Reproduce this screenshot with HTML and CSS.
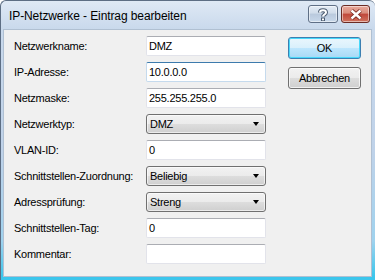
FILE: index.html
```html
<!DOCTYPE html>
<html lang="de">
<head>
    <meta charset="UTF-8">
    <meta name="viewport" content="width=device-width, initial-scale=1.0">
    <title>IP-Netzwerke - Eintrag bearbeiten</title>
    <link rel="stylesheet" href="styles.css">
</head>
<body>
    <div class="window">
        <div class="titlebar">
            <span class="title">IP-Netzwerke - Eintrag bearbeiten</span>
            <div class="caption-buttons">
                <div class="cap help">
                    <svg width="12" height="13" viewBox="0 0 12 13">
                        <path d="M3 4.5 C3 1.5 9 1.5 9 4.5 C9 6.5 6 6.5 6 8.5" fill="none" stroke="#4b5b70" stroke-width="4"/>
                        <rect x="4" y="9.5" width="4" height="3.5" fill="#4b5b70"/>
                        <path d="M3 4.5 C3 1.5 9 1.5 9 4.5 C9 6.5 6 6.5 6 8.5" fill="none" stroke="#fff" stroke-width="2"/>
                        <rect x="5" y="10.5" width="2" height="1.8" fill="#fff"/>
                    </svg>
                </div>
                <div class="cap close">
                    <svg width="14" height="11" viewBox="0 0 14 11">
                        <path d="M2.5 1.5 L11.5 9.5 M11.5 1.5 L2.5 9.5" stroke="#7a2a22" stroke-width="4.2"/>
                        <path d="M2.5 1.5 L11.5 9.5 M11.5 1.5 L2.5 9.5" stroke="#fff" stroke-width="2.4"/>
                    </svg>
                </div>
            </div>
        </div>
        <div class="client">
            <div class="form">
                <span class="label">Netzwerkname:</span>
                <div class="field">DMZ</div>

                <span class="label">IP-Adresse:</span>
                <div class="field focused">10.0.0.0</div>

                <span class="label">Netzmaske:</span>
                <div class="field">255.255.255.0</div>

                <span class="label">Netzwerktyp:</span>
                <div class="combo">DMZ<span class="arrow"></span></div>

                <span class="label">VLAN-ID:</span>
                <div class="field">0</div>

                <span class="label">Schnittstellen-Zuordnung:</span>
                <div class="combo">Beliebig<span class="arrow"></span></div>

                <span class="label">Adressprüfung:</span>
                <div class="combo">Streng<span class="arrow"></span></div>

                <span class="label">Schnittstellen-Tag:</span>
                <div class="field">0</div>

                <span class="label">Kommentar:</span>
                <div class="field"></div>
            </div>
            <div class="actions">
                <div class="btn default">OK</div>
                <div class="btn">Abbrechen</div>
            </div>
        </div>
    </div>
</body>
</html>
```

FILE: styles.css
```css
body {
    margin: 0;
    padding: 0;
    font-family: 'Liberation Sans', Arial, sans-serif;
    background-color: #ffffff;
}
.window {
    width: 375px;
    height: 280px;
    box-sizing: border-box;
    display: flex;
    flex-direction: column;
    padding: 0 3px 3px 2px;
    border-top: 1px solid #5d6e84;
    border-left: 1px solid #5d6e84;
    border-radius: 6px 6px 0 0;
    background: linear-gradient(180deg, #dfe9f5 0px, #c9d9ec 28px, #bfd2e9 150px, #9fd2ee 240px, #3cc6ec 275px);
}
.titlebar {
    height: 28px;
    display: flex;
    align-items: center;
    justify-content: space-between;
}
.title {
    margin-left: 6px;
    font-size: 12px;
    letter-spacing: -0.1px;
    color: #000;
    margin-top: 1px;
}
.caption-buttons {
    display: flex;
    gap: 3px;
    align-self: flex-start;
    margin-top: 4px;
    margin-right: 2px;
}
.cap {
    height: 16px;
    border: 1px solid #5f6f86;
    border-radius: 3px;
    display: flex;
    align-items: center;
    justify-content: center;
    box-shadow: inset 0 0 0 1px rgba(255, 255, 255, 0.5);
}
.help {
    width: 28px;
    background: linear-gradient(180deg, #e4ecf6 0%, #d0dcea 45%, #b9c9dd 50%, #c8d8ea 100%);
}
.close {
    width: 27px;
    border-color: #6b2b24;
    background: linear-gradient(180deg, #e9a99c 0%, #d98c7c 45%, #c0473a 50%, #d0735f 100%);
}
.client {
    flex: 1;
    display: flex;
    border: 1px solid #b0c0d2;
    background-color: #f0f0f0;
    padding: 6px 0 0 10px;
}
.form {
    display: grid;
    grid-template-columns: 132px 120px;
    grid-auto-rows: 20px;
    row-gap: 6px;
    align-content: start;
}
.label {
    font-size: 11px;
    letter-spacing: -0.25px;
    color: #000;
    align-self: center;
}
.field {
    box-sizing: border-box;
    height: 20px;
    background-color: #ffffff;
    border: 1px solid #e2e3ea;
    border-top-color: #abadb3;
    border-radius: 2px;
    font-size: 11px;
    letter-spacing: -0.25px;
    line-height: 18px;
    padding-left: 2px;
    color: #000;
}
.field.focused {
    border-color: #c5daed;
    border-top-color: #3d7bad;
}
.combo {
    box-sizing: border-box;
    height: 20px;
    display: flex;
    align-items: center;
    justify-content: space-between;
    border: 1px solid #707070;
    border-radius: 3px;
    background: linear-gradient(180deg, #f2f2f2 0%, #ebebeb 50%, #dddddd 51%, #cfcfcf 100%);
    box-shadow: inset 0 0 0 1px rgba(255, 255, 255, 0.6);
    font-size: 11px;
    letter-spacing: -0.25px;
    padding: 0 6px 0 3px;
    color: #000;
}
.arrow {
    width: 0;
    height: 0;
    border-left: 3.5px solid transparent;
    border-right: 3.5px solid transparent;
    border-top: 4px solid #000;
}
.actions {
    display: flex;
    flex-direction: column;
    gap: 8px;
    margin-left: 22px;
    margin-top: 1px;
}
.btn {
    box-sizing: border-box;
    width: 73px;
    height: 22px;
    border: 1px solid #707070;
    border-radius: 3px;
    background: linear-gradient(180deg, #f2f2f2 0%, #ebebeb 50%, #dddddd 51%, #cfcfcf 100%);
    box-shadow: inset 0 0 0 1px rgba(255, 255, 255, 0.7);
    font-size: 11px;
    letter-spacing: -0.25px;
    text-align: center;
    line-height: 20px;
    color: #000;
}
.btn.default {
    border-color: #3c7fb1;
    background: linear-gradient(180deg, #eaf6fd 0%, #d9f0fc 50%, #bee6fd 51%, #a7d9f5 100%);
    box-shadow: inset 0 0 0 1px #48d8fa;
}
```
